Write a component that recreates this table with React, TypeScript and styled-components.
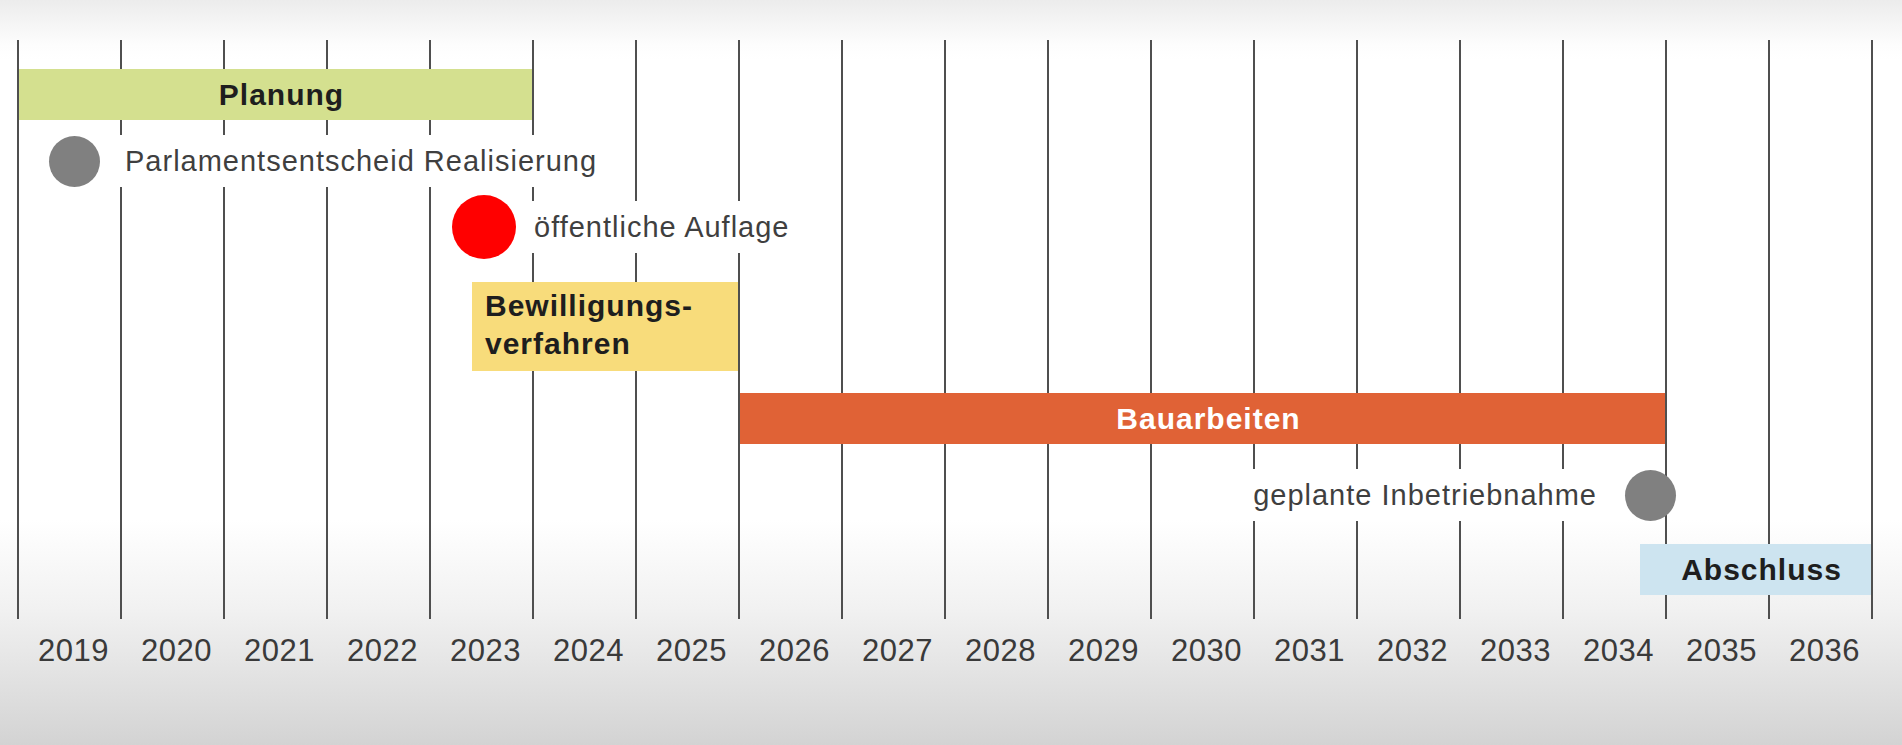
import React from "react";
import { styled, createGlobalStyle } from "styled-components";

const COL = 103;
const YEARS = Array.from({ length: 18 }, (_, i) => 2019 + i);

const GlobalStyle = createGlobalStyle`
  html, body {
    margin: 0;
    padding: 0;
  }
  body {
    width: 1902px;
    height: 745px;
    overflow: hidden;
    font-family: "Liberation Sans", Arial, Helvetica, sans-serif;
    background: linear-gradient(
      to bottom,
      #ececec 0px,
      #fdfdfd 45px,
      #ffffff 60px,
      #ffffff 520px,
      #f1f1f1 610px,
      #d3d3d3 745px
    );
  }
`;

const Timeline = () => {
  return (
    <S.Page>
      <S.Chart>
        {/* Planung */}
        <S.Bar $row={1} $from={1} $to={6} $color="#d4e08f">
          Planung
        </S.Bar>

        <S.Milestone $row={3} $from={1} $to={7} $offset={32}>
          <S.Dot $size={51} $color="#808080" />
          <S.Label $padLeft={25}>Parlamentsentscheid Realisierung</S.Label>
        </S.Milestone>

        <S.Milestone $row={5} $from={5} $to={10} $offset={23}>
          <S.Dot $size={64} $color="#ff0000" />
          <S.Label $padLeft={18}>öffentliche Auflage</S.Label>
        </S.Milestone>

        <S.Box $row={7} $from={5} $to={8} $offset={43} $color="#f8dc7b">
          Bewilligungs-
          <br />
          verfahren
        </S.Box>

        <S.Bar $row={9} $from={8} $to={17} $color="#e06236" $light>
          Bauarbeiten
        </S.Bar>

        <S.MilestoneEnd $row={11} $from={12} $to={18} $offsetRight={92}>
          <S.Label $padLeft={8} $padRight={28}>
            geplante Inbetriebnahme
          </S.Label>
          <S.Dot $size={51} $color="#808080" />
        </S.MilestoneEnd>

        <S.Bar $row={13} $from={16} $to={19} $color="#cde4f0" $offset={78}>
          Abschluss
        </S.Bar>
      </S.Chart>

      <S.Years>
        {YEARS.map((year) => (
          <S.Year key={year}>{year}</S.Year>
        ))}
      </S.Years>
    </S.Page>
  );
};

export default function App() {
  return (
    <>
      <GlobalStyle />
      <Timeline />
    </>
  );
}

type Span = { $row: number; $from: number; $to: number };

const S = {
  Page: styled.main`
    padding: 40px 0 0 17px;
  `,
  Chart: styled.section`
    width: ${COL * 18 + 2}px;
    padding: 29px 0 24px;
    display: grid;
    grid-template-columns: repeat(18, ${COL}px) 2px;
    grid-template-rows: 51px 15px 52px 8px 64px 23px 89px 22px 51px 25px 52px 23px 51px;
    background-image: repeating-linear-gradient(
      to right,
      #4f4f4f 0px,
      #4f4f4f 2px,
      transparent 2px,
      transparent ${COL}px
    );
  `,
  Bar: styled.div<Span & { $color: string; $light?: boolean; $offset?: number }>`
    grid-row: ${(p) => p.$row};
    grid-column: ${(p) => p.$from} / ${(p) => p.$to};
    margin-left: ${(p) => p.$offset ?? 2}px;
    padding-left: 12px;
    background-color: ${(p) => p.$color};
    color: ${(p) => (p.$light ? "#ffffff" : "#1e1e1e")};
    display: flex;
    align-items: center;
    justify-content: center;
    font-size: 30px;
    font-weight: 700;
    letter-spacing: 1px;
  `,
  Box: styled.div<Span & { $color: string; $offset: number }>`
    grid-row: ${(p) => p.$row};
    grid-column: ${(p) => p.$from} / ${(p) => p.$to};
    margin-left: ${(p) => p.$offset}px;
    background-color: ${(p) => p.$color};
    color: #1e1e1e;
    padding: 5px 0 0 13px;
    font-size: 30px;
    line-height: 38px;
    font-weight: 700;
    letter-spacing: 1px;
  `,
  Milestone: styled.div<Span & { $offset: number }>`
    grid-row: ${(p) => p.$row};
    grid-column: ${(p) => p.$from} / ${(p) => p.$to};
    justify-self: start;
    margin-left: ${(p) => p.$offset}px;
    display: flex;
    align-items: center;
  `,
  MilestoneEnd: styled.div<Span & { $offsetRight: number }>`
    grid-row: ${(p) => p.$row};
    grid-column: ${(p) => p.$from} / ${(p) => p.$to};
    justify-self: end;
    margin-right: ${(p) => p.$offsetRight}px;
    display: flex;
    align-items: center;
  `,
  Dot: styled.span<{ $size: number; $color: string }>`
    flex: none;
    width: ${(p) => p.$size}px;
    height: ${(p) => p.$size}px;
    border-radius: 50%;
    background-color: ${(p) => p.$color};
  `,
  Label: styled.span<{ $padLeft: number; $padRight?: number }>`
    height: 52px;
    display: flex;
    align-items: center;
    padding: 0 ${(p) => p.$padRight ?? 6}px 0 ${(p) => p.$padLeft}px;
    background-color: #ffffff;
    color: #3f3f3f;
    font-size: 29px;
    letter-spacing: 1px;
    white-space: nowrap;
  `,
  Years: styled.div`
    margin-top: 14px;
    width: ${COL * 18 + 2}px;
    display: grid;
    grid-template-columns: repeat(18, ${COL}px);
  `,
  Year: styled.span`
    padding-left: 10px;
    text-align: center;
    color: #3a3a3a;
    font-size: 31px;
    line-height: 36px;
    letter-spacing: 0.5px;
  `,
};
